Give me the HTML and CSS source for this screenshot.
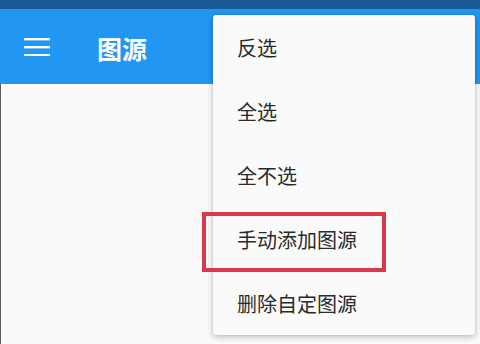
FILE: index.html
```html
<!DOCTYPE html>
<html lang="zh">
<head>
<meta charset="utf-8">
<link rel="stylesheet" href="styles.css">
</head>
<body>
<div class="screen">
  <div class="status-bar"></div>
  <header class="app-bar">
    <svg class="menu-icon" width="26" height="18" viewBox="0 0 26 18">
      <rect x="0" y="0" width="26" height="2.4" fill="#fff"/>
      <rect x="0" y="8" width="26" height="2.4" fill="#fff"/>
      <rect x="0" y="16" width="26" height="2.4" fill="#fff"/>
    </svg>
    <h1 class="title">图源</h1>
  </header>
  <main class="content"></main>

  <ul class="popup">
    <li class="popup-item">反选</li>
    <li class="popup-item">全选</li>
    <li class="popup-item">全不选</li>
    <li class="popup-item">手动添加图源</li>
    <li class="popup-item">删除自定图源</li>
  </ul>
  <div class="highlight"></div>
</div>
</body>
</html>
```

FILE: styles.css
```css
* { box-sizing: border-box; }
html, body { margin: 0; padding: 0; }
body {
  width: 480px;
  height: 344px;
  overflow: hidden;
  font-family: "Noto Sans CJK SC", "Noto Sans", sans-serif;
  background: #fafafa;
}
.screen {
  position: relative;
  width: 480px;
  height: 344px;
  display: flex;
  flex-direction: column;
}
.status-bar {
  height: 9px;
  background: #1a5b97;
  flex: none;
}
.app-bar {
  height: 75px;
  flex: none;
  background: #2196f3;
  display: flex;
  align-items: center;
  padding-left: 24px;
}
.menu-icon { display: block; margin-top: 1px; }
.title {
  margin: 3px 0 0 47px;
  color: #fff;
  font-size: 25px;
  font-weight: 700;
  line-height: 1;
}
.content {
  flex: 1;
  background: #fafafa;
  border-left: 1px solid #5a5a5a;
}
.popup {
  position: absolute;
  left: 213px;
  top: 15px;
  width: 262px;
  margin: 0;
  padding: 0;
  list-style: none;
  background: #fafafa;
  border-radius: 3px;
  box-shadow: 0 2px 6px rgba(0,0,0,0.25), 0 0 2px rgba(0,0,0,0.12);
}
.popup-item {
  height: 64px;
  display: flex;
  align-items: center;
  padding-left: 24px;
  font-size: 20px;
  color: #2a2a2a;
}
.highlight {
  position: absolute;
  left: 202px;
  top: 212px;
  width: 184px;
  height: 60px;
  border: 4px solid #d93a4b;
}
```
